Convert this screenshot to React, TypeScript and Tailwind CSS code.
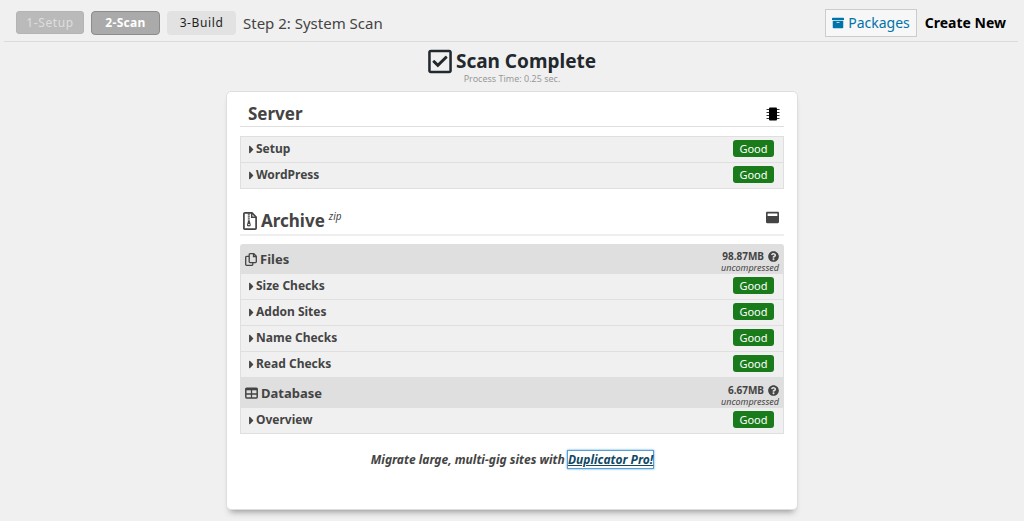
import React, { useState } from 'react';
import { FaArchive, FaCaretRight, FaQuestionCircle, FaRegCheckSquare, FaWindowMaximize } from 'react-icons/fa';

const serverChecks = ['Setup', 'WordPress'];
const fileChecks = ['Size Checks', 'Addon Sites', 'Name Checks', 'Read Checks'];
const databaseChecks = ['Overview'];

const ChipIcon = () => (
    <svg viewBox="0 0 14 14" className="size-[14px] text-black" aria-hidden="true">
        <rect x="3" y="0.5" width="8" height="13" rx="1" fill="currentColor" />
        <path d="M0.5 2.5H13.5M0.5 5.5H13.5M0.5 8.5H13.5M0.5 11.5H13.5" stroke="currentColor" strokeWidth="0.8" />
    </svg>
);

const ZipIcon = () => (
    <svg viewBox="0 0 14 18" className="h-[18px] w-[14px]" fill="none" stroke="currentColor" aria-hidden="true">
        <path d="M2 0.9H9L13.1 5V16.2Q13.1 17.1 12.2 17.1H1.8Q0.9 17.1 0.9 16.2V1.8Q0.9 0.9 2 0.9Z" strokeWidth="1.7" />
        <path d="M8.7 1V5.3H13" strokeWidth="1.5" />
        <path d="M5.8 1.5V9.5" strokeWidth="2" strokeDasharray="1.2 0.8" />
        <path d="M5 9H6.8L7.6 12.2A1.8 1.8 0 1 1 4.1 12.2Z" fill="currentColor" stroke="none" />
        <path d="M5 12.6H6.8" stroke="white" strokeWidth="0.9" />
    </svg>
);

const CopyIcon = () => (
    <svg viewBox="0 0 12 13" className="h-[13px] w-3" fill="none" stroke="currentColor" strokeWidth="1.3" aria-hidden="true">
        <path d="M5 0.7H8.8L11.3 3.2V8.8Q11.3 9.6 10.5 9.6H5Q4.2 9.6 4.2 8.8V1.5Q4.2 0.7 5 0.7Z" />
        <path d="M8.5 0.9V3.5H11.1" />
        <path d="M4 3.4H1.5Q0.7 3.4 0.7 4.2V11.5Q0.7 12.3 1.5 12.3H7Q7.8 12.3 7.8 11.5V9.8" />
    </svg>
);

const TableIcon = () => (
    <svg viewBox="0 0 13 12" className="h-3 w-[13px]" fill="none" stroke="currentColor" aria-hidden="true">
        <rect x="0.8" y="1.3" width="11.4" height="9.6" rx="0.8" strokeWidth="1.5" />
        <path d="M0.8 2.2H12.2" strokeWidth="2.2" />
        <path d="M6.5 2V11M1 7H12" strokeWidth="1.3" />
    </svg>
);

const CheckRow = ({ name }: { name: string }) => {
    const [open, setOpen] = useState(false);

    return (
        <li className="border-b border-[#dfdfdf]">
            <button
                type="button"
                aria-expanded={open}
                onClick={() => setOpen(!open)}
                className="flex h-[25px] w-full items-start justify-between pl-2 pr-[9px] pt-[3px] text-left"
            >
                <span className="flex items-center gap-[2px] text-[12px] font-bold leading-[18px]">
                    <FaCaretRight className="h-[13px] w-[5px]" />
                    {name}
                </span>
                <span className="h-[17px] w-[41px] rounded-[3px] bg-[#197b19] text-center text-[11px] leading-[17px] text-white">Good</span>
            </button>
            {open && <p className="px-4 pb-2 text-[12px]">All checks passed.</p>}
        </li>
    );
};

const CheckList = ({ names }: { names: string[] }) => (
    <ul className="border-x border-[#dfdfdf] bg-[#f0f0f0]">
        {names.map((name) => (
            <CheckRow key={name} name={name} />
        ))}
    </ul>
);

const GroupHeader = ({ icon, title, size }: { icon: React.ReactNode; title: string; size: string }) => (
    <div className="flex h-[30px] items-center justify-between bg-[#dfdfdf] px-[5px]">
        <h3 className="flex items-center gap-[3px] text-[13px] font-bold leading-5">
            {icon}
            {title}
        </h3>
        <div className="self-end text-right">
            <div className="flex items-center justify-end gap-1 text-[10px] font-bold leading-3">
                {size}
                <FaQuestionCircle className="size-[11px]" />
            </div>
            <div className="text-[9px] italic leading-3">uncompressed</div>
        </div>
    </div>
);

const App = () => {
    return (
        <div className="min-h-screen bg-[#f0f0f0] pb-3 font-['Noto_Sans','Open_Sans',sans-serif] text-[#444444]">
            <header className="mx-1 mr-[6px] flex h-[42px] items-center justify-between border-b border-[#dcdcdc] px-3 pt-1">
                <div className="flex items-center gap-[7px]">
                    <button type="button" disabled className="h-[23px] w-[68px] rounded-[3px] border border-[#b4b4b4] bg-[#bababa] text-[12px] leading-5 tracking-wider text-[#dedede]">1-Setup</button>
                    <button type="button" className="h-6 w-[69px] rounded-[4px] border border-[#8c8c8c] bg-[#aaaaaa] text-[12px] font-bold leading-5 tracking-wide text-white">2-Scan</button>
                    <button type="button" className="h-6 w-[69px] rounded-[4px] bg-[#e2e2e2] text-[12px] leading-5 tracking-wider text-[#222222]">3-Build</button>
                    <h1 className="text-[15px] leading-5">Step 2: System Scan</h1>
                </div>
                <nav className="flex items-center gap-2 text-[14px] leading-5">
                    <a href="#packages" className="flex h-7 items-center gap-1 border border-[#cccccc] bg-[#f7f7f7] px-[6px] text-[#0073aa]">
                        <FaArchive className="size-3" />
                        Packages
                    </a>
                    <a href="#new" className="font-bold text-black">Create New</a>
                </nav>
            </header>

            <main>
                <div className="pt-[7px] text-center">
                    <h2 className="flex h-6 items-center justify-center gap-1 text-[19px] font-bold leading-6 text-[#23282d]">
                        <FaRegCheckSquare className="h-[27px] w-[24px]" />
                        Scan Complete
                    </h2>
                    <p className="text-[9px] leading-3 text-[#999999]">Process Time: 0.25 sec.</p>
                </div>

                <section className="mx-auto mt-[6px] w-full max-w-[572px] rounded-[5px] border border-[#dedede] bg-white px-[13px] pb-[39px] pt-[10px] shadow-[0_6px_6px_-4px_#999999]">
                    <div className="flex h-[25px] items-center justify-between border-b border-[#dfdfdf] pl-2 pr-1">
                        <h2 className="text-[17px] font-bold leading-6">Server</h2>
                        <ChipIcon />
                    </div>
                    <div className="mt-[9px] border-t border-[#dfdfdf]">
                        <CheckList names={serverChecks} />
                    </div>

                    <div className="mt-[18px] flex h-[29px] justify-between border-b-2 border-[#eeeeee] pl-[3px] pr-[5px]">
                        <h2 className="flex items-center gap-1 text-[17px] font-bold leading-6">
                            <ZipIcon />
                            Archive
                            <sup className="text-[10px] font-normal italic leading-3">zip</sup>
                        </h2>
                        <FaWindowMaximize className="mt-1 size-[13px]" />
                    </div>
                    <div className="mt-2 overflow-hidden rounded-t-[3px]">
                        <GroupHeader icon={<CopyIcon />} title="Files" size="98.87MB" />
                        <CheckList names={fileChecks} />
                        <GroupHeader icon={<TableIcon />} title="Database" size="6.67MB" />
                        <CheckList names={databaseChecks} />
                    </div>

                    <p className="mt-4 text-center text-[12px] font-bold italic leading-5">
                        Migrate large, multi-gig sites with{' '}
                        <a href="#pro" className="text-[#124964] underline shadow-[0_0_0_1px_#5b9dd9,0_0_2px_1px_#1e8cbecc]">Duplicator Pro!</a>
                    </p>
                </section>
            </main>
        </div>
    );
};

export default App;
